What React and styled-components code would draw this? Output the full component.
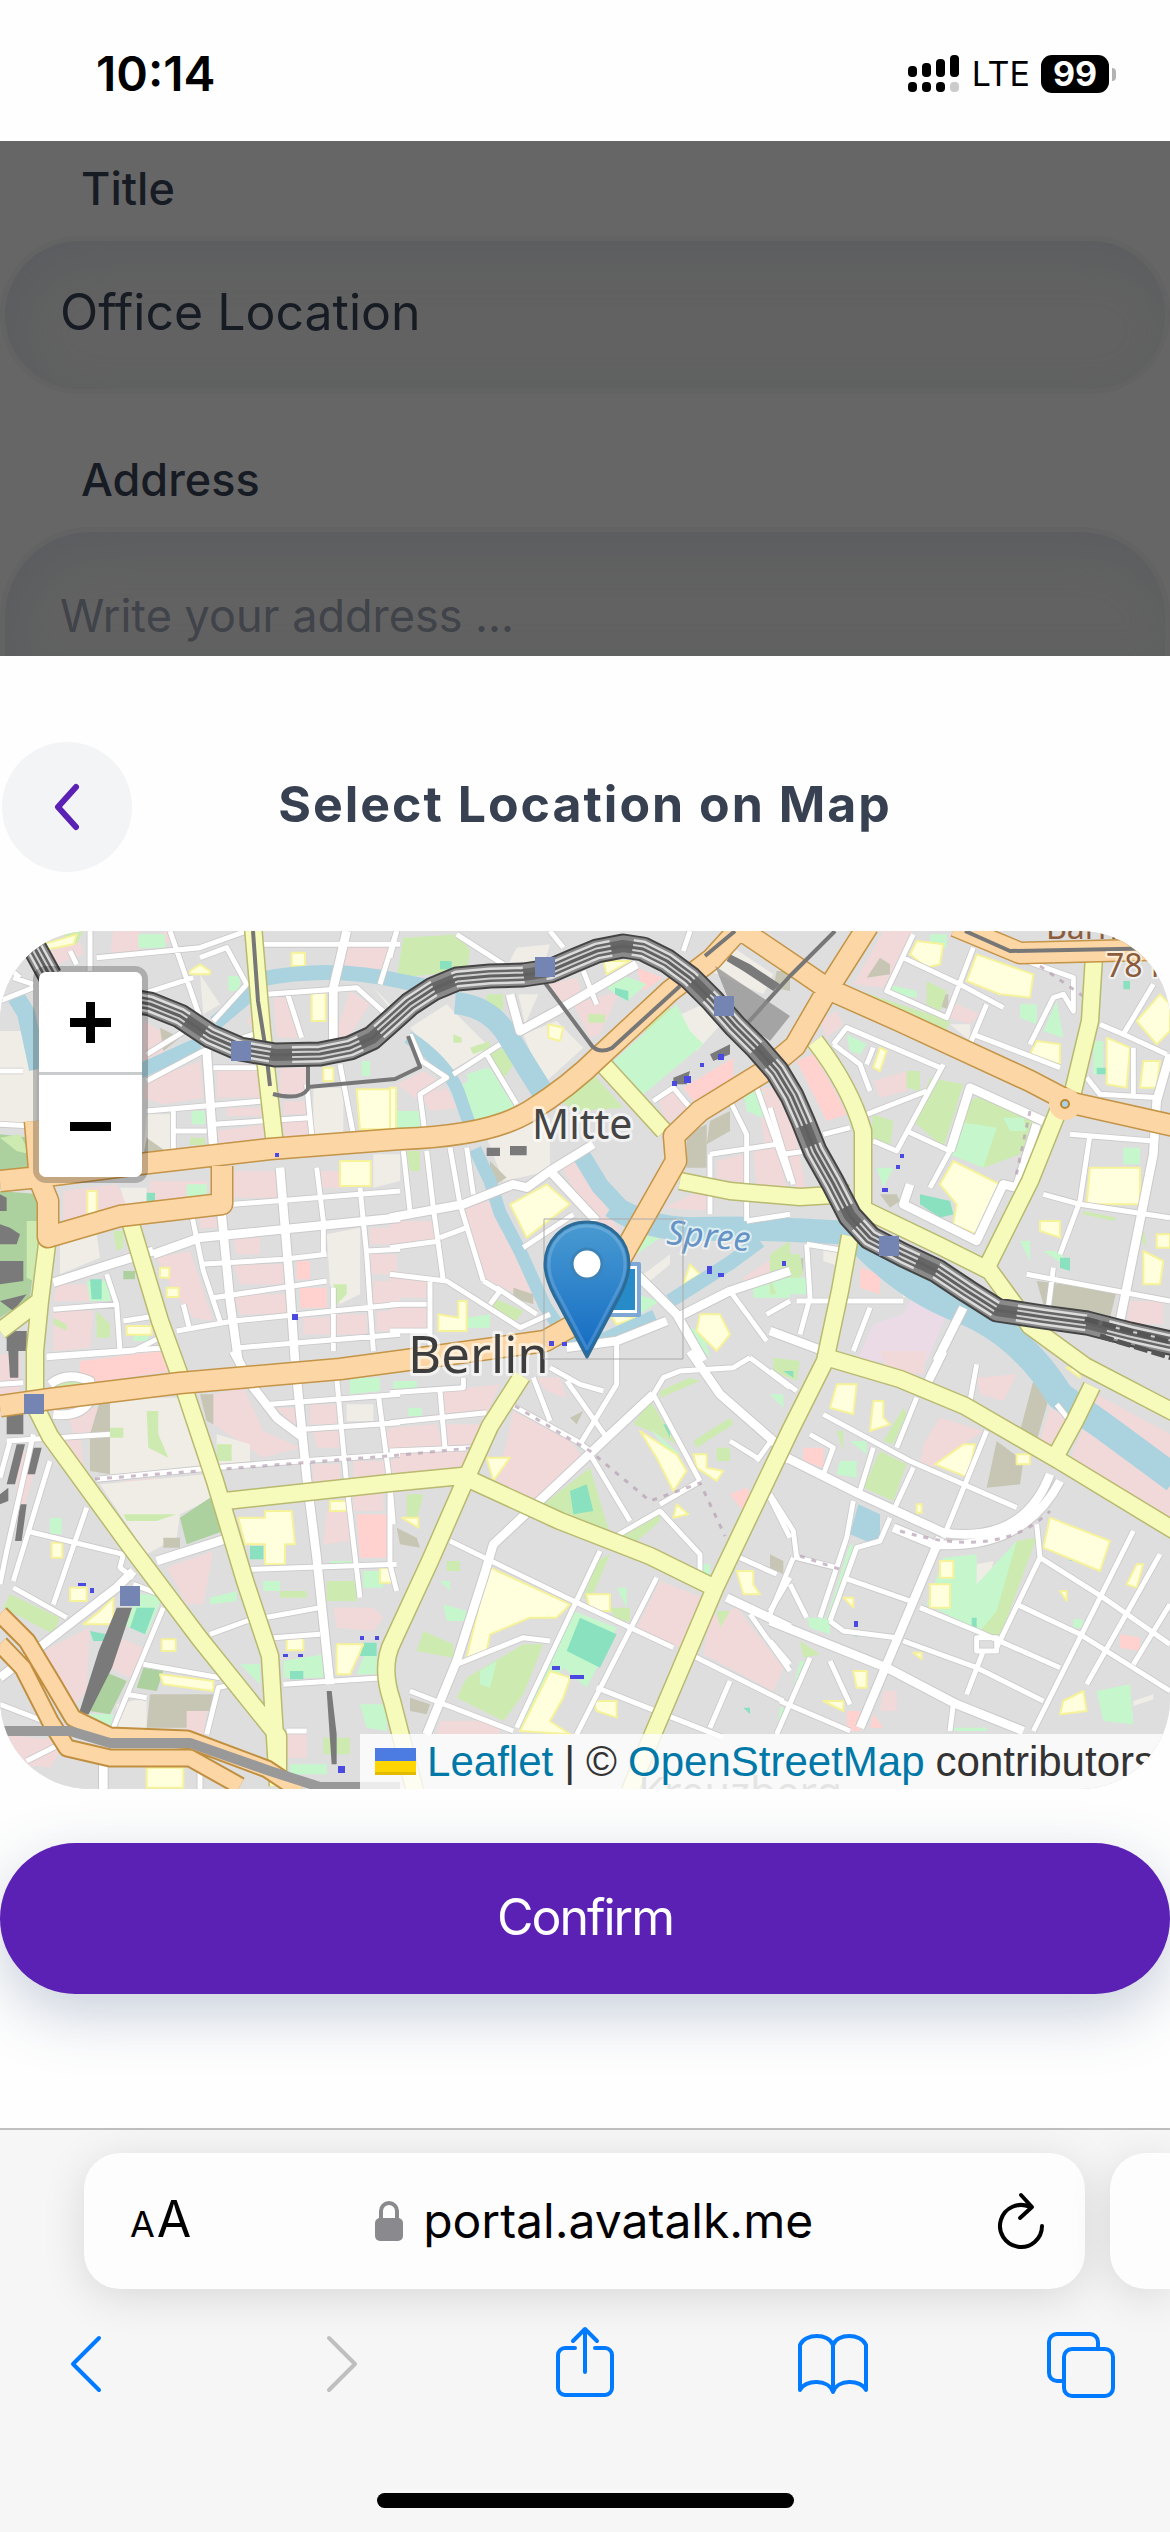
import React from "react";
import styled, { createGlobalStyle } from "styled-components";

const GlobalStyle = createGlobalStyle`
  *, *::before, *::after { box-sizing: border-box; }
  body {
    margin: 0;
    background: #fefefe;
    font-family: Inter, "Liberation Sans", sans-serif;
    color: #000;
  }
  button, input, textarea { font-family: inherit; }
  button { border: 0; padding: 0; margin: 0; background: none; cursor: pointer; color: inherit; }
  svg { display: block; }
`;

const Page = styled.div`
  min-height: 100vh;
  display: flex;
  flex-direction: column;
  overflow: hidden;
`;

/* ---------- status bar ---------- */
const StatusBar = styled.header`
  display: flex;
  justify-content: space-between;
  align-items: center;
  padding: 42px 54px 35px 96px;
`;
const Clock = styled.time`
  font-size: 48px;
  line-height: 64px;
  font-weight: 600;
`;
const StatusIcons = styled.div`
  display: flex;
  align-items: center;
`;
const Network = styled.span`
  margin: 0 11px 0 12px;
  font-size: 34px;
  line-height: 38px;
`;
const Battery = styled.span`
  width: 68px;
  border-radius: 11px;
  background: #000;
  color: #fff;
  font-size: 34px;
  line-height: 38px;
  font-weight: 700;
  text-align: center;
`;
const BatteryTip = styled.span`
  width: 4px;
  height: 13px;
  margin-left: 3px;
  border-radius: 0 4px 4px 0;
  background: #b3b3b3;
`;

/* ---------- dimmed form ---------- */
const Form = styled.form`
  display: flex;
  flex-direction: column;
  gap: 56px;
  padding-top: 18px;
  background: #666;
`;
const Field = styled.div`
  display: flex;
  flex-direction: column;
  gap: 17px;
`;
const Label = styled.label`
  padding-left: 81px;
  font-size: 45px;
  line-height: 60px;
  font-weight: 500;
  color: #171b24;
`;
const fieldLook = `
  width: 100%;
  border: 5px solid #636363;
  background: #616261;
  box-shadow: inset 12px 16px 40px #5c5d61;
  line-height: 60px;
  color: #171b24;
  outline: none;
  &::placeholder { color: #404349; opacity: 1; }
`;
const TextInput = styled.input`
  ${fieldLook}
  height: 158px;
  padding: 0 55px 6px;
  border-radius: 79px;
  font-size: 50px;
`;
const TextArea = styled.textarea`
  ${fieldLook}
  display: block;
  height: 129px;
  padding: 54px 55px 0;
  border-bottom: 0;
  border-radius: 90px 90px 0 0;
  font-size: 45px;
  resize: none;
  overflow: hidden;
`;

/* ---------- sheet ---------- */
const Sheet = styled.main`
  flex: 1;
  padding: 86px 0 134px;
  background: #fefefe;
`;
const SheetHeader = styled.div`
  display: grid;
  grid-template-columns: 132px 1fr 132px;
  align-items: center;
  margin-bottom: 59px;
`;
const BackButton = styled.button`
  width: 130px;
  height: 130px;
  margin-left: 2px;
  display: grid;
  place-items: center;
  border-radius: 50%;
  background: #f2f4f6;
`;
const SheetTitle = styled.h1`
  margin: 0;
  padding-bottom: 6px;
  text-align: center;
  font-size: 50px;
  line-height: 64px;
  font-weight: 700;
  letter-spacing: 2px;
  color: #374151;
`;
const ConfirmButton = styled.button`
  display: block;
  width: 100%;
  height: 151px;
  margin-top: 54px;
  padding-bottom: 4px;
  border-radius: 76px;
  background: #5b20b4;
  box-shadow: 0 20px 60px rgba(60, 85, 130, 0.28);
  color: #fff;
  font-size: 50px;
  letter-spacing: -2px;
`;

/* ---------- map ---------- */
const MapFrame = styled.section`
  position: relative;
  aspect-ratio: 1170 / 858;
  overflow: hidden;
  border-radius: 90px;
  background: #dedede;
`;
const ZoomControl = styled.div`
  position: absolute;
  top: 35px;
  left: 33px;
  border: 6px solid rgba(0, 0, 0, 0.22);
  border-radius: 13px;
  background-clip: padding-box;
  overflow: hidden;
`;
const ZoomButton = styled.button`
  display: grid;
  place-items: center;
  width: 103px;
  height: ${(p) => (p.$first ? 103 : 102)}px;
  background: #fff;
  border-bottom: ${(p) => (p.$first ? "3px solid #c9cccd" : "0")};
`;
const Attribution = styled.div`
  position: absolute;
  right: 0;
  bottom: 0;
  display: flex;
  align-items: center;
  gap: 11px;
  padding: 0 15px;
  background: rgba(255, 255, 255, 0.8);
  font-family: "Liberation Sans", Arial, sans-serif;
  font-size: 42px;
  line-height: 55px;
  color: #333;
  white-space: nowrap;
`;
const MapLink = styled.a`
  display: inline-flex;
  align-items: center;
  gap: 11px;
  color: #0078a8;
  text-decoration: none;
`;
const Flag = styled.span`
  width: 41px;
  height: 27px;
  background: linear-gradient(#4c7be1 50%, #ffd500 50% 90%, #e0bb00 90%);
`;

/* ---------- browser chrome ---------- */
const Browser = styled.footer`
  border-top: 2px solid #bfbfbf;
  padding: 23px 0 24px;
  background: #f6f6f6;
`;
const TabStrip = styled.div`
  display: flex;
  gap: 25px;
  padding-left: 84px;
`;
const AddressBar = styled.div`
  flex: 1;
  display: flex;
  justify-content: space-between;
  align-items: center;
  height: 136px;
  padding: 0 40px 0 46px;
  border-radius: 36px;
  background: #fdfdfd;
  box-shadow: 0 8px 44px rgba(0, 0, 0, 0.12);
`;
const NextTab = styled.div`
  width: 60px;
  border-radius: 36px 0 0 36px;
  background: #fdfdfd;
  box-shadow: 0 8px 44px rgba(0, 0, 0, 0.12);
`;
const TextSizeButton = styled.button`
  font-size: 50px;
  line-height: 60px;
`;
const SmallA = styled.span`
  margin-right: 2px;
  font-size: 36px;
`;
const UrlButton = styled.button`
  display: flex;
  align-items: center;
  gap: 20px;
  font-size: 48px;
  line-height: 60px;
`;
const Toolbar = styled.nav`
  display: flex;
  justify-content: space-between;
  margin: 37px 54px 95px;
`;
const ToolButton = styled.button`
  color: ${(p) => (p.disabled ? "#bfbfbf" : "#007aff")};
`;
const HomeIndicator = styled.div`
  width: 417px;
  height: 15px;
  margin: 0 auto;
  border-radius: 8px;
  background: #000;
`;

/* ---------- map data ---------- */
const INK = {
  pink: "#f1d9d9",
  beige: "#f0ede6",
  khaki: "#c7c6b4",
  salmon: "#ffd2cf",
  lilac: "#ebdbe7",
  green: "#cdebb0",
  mint: "#c6f7cc",
  forest: "#acd19e",
  teal: "#89e1c0",
  yellow: "#ffffdd",
  water: "#aad3df",
  dark: "#7a7a7a",
};

const TILES = [
  {
    at: [0, 920],
    land: {
      pink: "M150 90L240 60 250 100 170 130ZM340 30h80v60l-90 20zM490 30h30v30l-40 10zM1040 70l130 10-30 90-110-10zM430 300l70 40-10 60-60 20zM650 440h140l-10 90H650zM440 480l160-60 10 110-120 20-60-20zM840 440h80v80h-80zM1050 210l60 40-60 90-50 20zM740 300l40-50v100zM820 230h40l50 120h-80zM650 630l140-20v40l-130 20zM680 560h110v25H680zM850 540h80v40h-80zM850 600h80v40l-80 10zM190 810l160-20 30 60-190 50zM450 780h170v50l-180 20zM690 750h140v80H690zM960 750h70v50h-70zM600 890h50v30h-50zM700 950h80v50h-70zM700 1030h150v60H720zM700 1120h160v60H720zM1110 920h90v50h-90zM1110 1000h80v60h-80zM1120 1080h80v70h-80zM170 1090h90l10 50h-110zM160 1170h120l-10 110-110 10zM470 1010l100-20 70 210-60-10-60-80zM910 1190h80v50h-80zM1010 1180h90v60h-90zM1130 1170h70v60h-70zM400 1290l70-20 20 60H300z",
      beige: "M0 330h110v280H0zM440 580h80v120h-90zM940 500h90v140h-90zM1120 200l80 80v20zM180 960l110-20 10 70-120 50zM980 940l100-20v200l-60 30-30-60zM1120 700h80v80l-80 20zM360 800h80v60h-60zM600 160l60 90-50 30z",
      khaki: "M480 320l60 30-50 40zM440 650l70 50h-80z",
      salmon: "M900 1100h80v60h-80zM890 1020h40v55h-40z",
      forest: "M0 640l90 10 20 90-110 20zM0 810l120 10v60l-30 250-90 60zM370 1050h35v25h-35z",
      dark: "M0 910l30 10 30 20-10 30H0zM0 1020h70v60l-70 10zM0 1140l80-20-40 50zM20 1230h60v60H20zM0 820l20 10v40H0z",
      green: "M0 650l60-10 30 60-40-10zM80 900h40l-20 180-20-10zM570 650h45v22h-45zM340 930h30v50l-20 10zM160 1190l40 20v20l-40-20zM290 1170l40 40v40h-40zM1000 1090h40v30l-30 30zM170 30l80 0-20 40z",
      mint: "M415 40h80v40h-80zM685 165h35v45h-35zM575 570h40v40h-40zM560 790h60v35h-60zM1085 420h25v45h-25zM260 1080h70v60h-60zM400 1240h45v20h-45z",
      teal: "M270 1075h35v60h-30zM440 815h25v30h-25z",
      yellow: "M875 95h40v40h-40zM570 150l30-20 30 20v10h-60zM935 215h42v85h-42zM1070 505h115v120H1080zM1020 720h92v75h-92zM262 810h28v75h-28zM130 70l100-30-10 30-100 20zM970 440h30v40h-30zM480 1040h28v30h-28zM500 1100h36v28h-36zM380 1215h75v26h-75z",
    },
    minor: "M270 30V150M40 170L100 190M0 240L100 200M210 90l20 40M290 110L600 80 740 30M510 30L600 290M440 215L580 170M600 110l80-30 60 110-100 110M440 400L570 320M440 480L610 390 790 330M780 70H1200M1190 30l-50 160M800 220L1070 200 1170 290M860 210L905 350M640 440H790M440 570L790 540M520 570V700M520 630H620M1020 430L1060 640M920 490L935 640M640 610L930 590M0 610L100 615M0 450h70M950 740L970 900V1000M575 880L610 1050 660 1200M1080 800L1100 1000 1120 1290M700 850L1200 810M600 1030L850 1015 980 1000M640 1130L980 1080M160 1165L350 1150M530 1230L700 1200 1200 1150M320 1060L350 1150 360 1290M370 1200L500 1180M140 1310L400 1290 500 1240M720 1280L1200 1240M1000 1100V1290M550 1150L570 1230M1100 990L1200 985M0 120l60 50",
    wide: "M620 390L640 680M1040 30L1000 200V380M840 740L870 1100 885 1320M665 880L690 1140 715 1320M460 1000L600 950 1200 890M160 1085L330 1030 460 990",
  },
  {
    at: [390, 920],
    land: {
      pink: "M470 190l90-20 20 50-60 30zM550 250l140-40-60 130-30 10zM20 490l80-40 60 40-60 60zM100 530l70-30 30 60-80 10zM800 520l60-20 30 60-60 50zM510 730l50-20 130 220-30 60zM220 850L310 840 400 1040 460 1100 440 1150 280 1070zM0 900h140v70H0zM0 1070h110v60H0zM0 1150h110v80H0zM980 720l80-20 10 90-90-20zM1090 680h70l30 120h-90zM820 860l130-60v70zM1100 500h60l40 100v100h-70zM1060 1070l90-60v50l-80 40z",
      beige: "M60 320L170 250 300 380 180 450zM400 340L500 300 580 380 460 490zM380 80l100-10-20 70h-110zM830 300l130-60 60 40-100 110zM290 650L480 590V750L340 780zM1000 60l150 100-30 60-160-70zM385 220h60l-40 90zM760 1060l80-60v30l-60 50z",
      khaki: "M890 640l60-30v130h-60zM960 600l60-30v60l-70 40zM300 720l50 50-50 30zM1160 150h40v60l-50-10zM370 1100l60 20v30l-60-20z",
      salmon: "M740 140l80 30-60 40zM880 500l150-90v60l-120 70z",
      green: "M40 50L210 40 240 90 230 150 20 170zM510 540L610 460 700 560 560 570zM300 400l60-30 10 60-40 60zM240 380l60-20v20l-50 20zM190 340l25 10v15h-25zM310 1130l90 40-30 40-60-50zM760 300l80-40 20 50-90 50zM430 860l50 0-70 50zM595 280h50v25h-50zM290 220h50v50l-50-30zM1140 1000l60-40v70zM50 690h40v60h-30z",
      mint: "M670 420L860 250 900 330 940 370 760 520zM200 500L300 440 380 570 250 600zM230 460l60-20 0 40-50 20zM20 570h70v55H20zM650 200l40-40 80 30-60 50zM730 940l80 10-70 50zM740 1120l70 20-60 40zM900 1220l40 10 20 80-50-50zM1060 510h60v80l-50-20zM230 1190l70-10v40h-70zM1090 1090h110v40h-110z",
      teal: "M675 200l40 10v30l-40-20zM150 120h35v25h-35zM965 1245h35v25h-35z",
      yellow: "M360 850L470 790 540 850 410 950zM640 120h80l-70 40zM475 310l45 10-10 40-35-10zM900 1030l30 30-50 30zM145 1180l60 10 0-50h25v90h-85zM930 1180l60 0 30 60-40 50-60-60zM0 500h18v130H0zM660 1180l80 10-60 20zM360 1240h60v60h-60z",
      dark: "M1020 100l60 30 90 60-20 20-90-60-50-30zM850 470l50-20-10 40h-40zM960 400l60-30v30l-50 20zM290 680h40v25h-40zM360 675h50v28h-50z",
    },
    minor: "M580 150L620 250M190 460L330 370M290 400L380 550M20 30L0 110M200 40L340 130M480 30l40 50M880 90L900 30M60 340L95 420 170 470 90 520 105 640M40 690L60 870M110 690L130 860 160 1080M180 680L210 850 280 1080M230 680L250 820M150 950L230 920M0 980L150 960M400 980L550 880M0 1060L170 1080 390 1220 480 1180M280 1080L330 1110 300 1150M320 1100L440 1180M120 1080V1320M0 1150H110M0 1230H120M790 540L850 500 900 560M1020 540L1070 640V900M1100 500L1200 780M960 700L1160 670M960 700V880M1020 1110L1130 1260M680 1260V1320M1070 900L1200 880M1130 1180L1200 1140",
    wide: "M360 220L390 330 500 270 740 130M0 890L220 850 370 790 410 800 480 750 610 670M480 750L620 900M740 1060L860 1180 940 1320M860 1190L1020 1110 1200 1050M530 1280L680 1260 830 1200",
  },
  {
    at: [770, 920],
    land: {
      pink: "M340 30h90l-90 170-90-10zM540 240l90 40-30 30-60-20zM310 480l100-30v60l-80 20zM150 300l50-30 20 40-50 40zM20 560h40l50 250H80zM1080 1140h100v70h-110z",
      beige: "M540 310h60v50zM160 980l60 20v40l-60-20zM370 1060l80 40-50 30z",
      khaki: "M330 110l30 20 0 30-70 10zM800 1080L1040 1110 1020 1190 880 1160 820 1150zM330 820l50 0 10 20-30 20zM500 220h35v45l-30-10zM40 1020l60-10v40l-60 20z",
      salmon: "M80 420l50-20 60 100 40 80-60 20zM270 1040l60 20v60l-60-20z",
      lilac: "M430 1120L540 1160 470 1320H260L310 1210 400 1180z",
      green: "M480 470L580 490 520 680 430 600zM560 560L640 520 800 600 750 700 640 740 540 700zM240 200L540 300 530 330 240 230zM310 580l60 20-10 80-60-30zM940 870l100 20-10 10-90-20zM1110 860l20 120-20-30zM0 1000l90 0 10 60-80 60H0zM410 450h40v60l-40-10zM470 180l60 30-20 60-40-20z",
      mint: "M860 240l20 110-60-20zM550 600l130 20-40 120-100-40zM700 590l60 0 10 40-50 0zM350 190l90 20v20l-80-10zM750 250l50 0 0 60-50-20zM320 740h50l-30 60zM750 960h30v60zM820 990h60v40zM1060 680h50v50h-50zM970 360h30v100h-30zM230 340l60 30-20 30-30-10zM480 40h50v40h-50zM0 1070h110v50H20z",
      teal: "M450 820l90 20 10 40-40 10-60-40zM590 790l60 10-10 15-50-10zM870 1010l30 0v40l-30-10zM980 440h30v20h-30zM1060 180h20v25h-20z",
      yellow: "M440 60l80 10-10 60-40 10-50-40zM620 100l170 60-10 70-90-10-100-40zM800 360l70 10v60l-90-30zM1100 300l70-80 30 30v80l-40 40zM1010 350l70 30-10 120-60-10zM1120 420h50l-10 80h-50zM960 740h150v110h-160zM1120 990l60 30-10 70h-50zM550 720L690 790 620 940 550 910 560 850 510 790zM810 900h60v50l-60-20zM310 440l20-60 20 10-20 60zM1160 940h40v40h-40z",
    },
    minor: "M430 40L350 210 530 290 610 80M400 110L570 190 700 260M650 250L600 370M610 340L870 440M780 370L850 230 880 220 910 270V170L740 110M190 370L230 320 510 440M190 370L270 430 300 510M310 380L290 430M520 430L380 690 310 660M410 630L540 690 480 800M290 580L470 510M160 640L240 620M0 560L70 790M40 700L110 690M80 1140H400M110 970L230 990M110 970L120 1130 90 1240M300 1160L250 1290M1150 190L1060 340 990 310M1060 340L1190 400M950 470L990 520 1170 530M1090 380V520M900 640L1150 660M960 640L930 840 870 1000M820 820L930 850 1200 890M770 1060L1200 1140M850 1040L830 1200",
    wide: "M540 690L600 500 820 600M800 610L740 800 700 790 620 960 400 850 420 790M1200 400L1160 540 1150 700 1050 1200M580 1160L500 1320M0 1230L160 1290",
  },
  {
    at: [0, 1350],
    land: {
      pink: "M640 130l90-20 60 130 110 50-110 30-150-100zM830 170h60v60zM930 160h80v60h-80zM940 240h90v50h-80zM370 390l100-10v90l-80 10zM500 650L640 600 610 760 560 760zM150 890L270 830 260 1020 200 1090 100 930zM360 860l70 30-40 90-60-30zM980 480l60-40 10 130-80 10zM1000 770h120l30 30-30 40-110-10zM560 1080h60l-10 70h-60zM860 1150h60v70h-60zM0 1150L200 1170 150 1250 60 1240zM150 250h90l10 90-60-20zM940 340h80v50h-80zM1060 330h140v50h-140zM1060 410h90v70h-90zM0 10h60v180H0zM200 170h100v80H220zM1150 240h50v50h-50zM60 300l60 0-60 220-20-20z",
      salmon: "M240 30L500 0 510 60 240 100zM1070 490h90v130h-80z",
      beige: "M330 140L540 140 630 350 330 370zM300 400L620 370 640 440 540 490 530 560 440 610zM650 250l100 30v60l-100 10zM1040 160h80v50h-80zM350 1060l90-20v100h-90z",
      khaki: "M300 150h30v220l-60-10V250zM600 130h40v90l-20-10zM490 560l50 0 0 30h-50zM450 1030h190v50l-80 0v50H440z",
      forest: "M540 500L630 440 670 540 560 580zM310 960l70 30-50 100-60-10zM430 950l60 10-20 60-60-10z",
      green: "M440 180h35l0 70 30 70-60-30zM330 230h40v30h-40zM650 280h45v50h-45zM30 730L180 800 160 850 10 770zM370 490h160l-60 20h-90zM980 690h90v60h-90zM840 720h80v20h-80zM970 1160h80v50h-80zM160 90h90v30h-90z",
      mint: "M1050 80h90v40l-90 10zM420 730h70l-50 120-70-30zM260 1090h80l-10 40zM850 930l120-20v70H850zM1080 1060h80v80l-60-10zM990 630h80v20h-80zM1090 660h60v50h-60zM720 940h60v60zM870 1240h110v30H870zM150 500h35v50h-35zM790 690h50v30h-50zM1130 870v100h-60l20-50zM630 740l80-20v30l-80 10z",
      teal: "M410 770h55l-30 80-45-20zM750 585h40v40h-40zM1090 875h40v40h-50zM270 840l50 10v20h-40zM870 960h40v25h-40z",
      yellow: "M715 500h80v-20h80l10 100h-30v60h-60v-60h-60zM155 575h32v45h-32zM210 710h50v40h-50zM485 865h42v35h-42zM480 970l160 20v30l-150-20zM250 820l50-40 40-40v80zM1010 880h80l-40 90h-40zM860 860h50v38h-50zM990 450h50v30h-50zM440 1250h110v60H440zM1140 650h38v45h-38z",
      dark: "M20 190h50v60H20zM350 770h46l-60 180-70 140h-30l60-190zM980 1020h15l15 130v90h-15zM50 280h25l-30 120H20zM0 430l25-20v40l-25 10zM100 290h25l-20 80H80zM60 460h20l-15 110H45zM25 0h30v80H30z",
    },
    minor: "M20 270L330 250M100 250L20 600 0 700M30 270L0 380M150 330L40 690M80 540L370 610 360 650 400 680M260 470L160 760M40 710L200 800M290 385L640 350 900 330 1200 310M1010 80L1040 400 1080 740M1135 130L1170 400 1180 520M810 160L1200 130M910 235L1200 215M750 655L1190 640M630 850L740 810 960 770M850 1000L1150 980M400 700L480 730M490 770L340 1130M430 940L660 980M700 1000L655 1010 620 1150M380 1030L440 1040M0 100L70 95M140 15L500 -10M600 1200V1320M0 1060L130 1110M80 1230L180 1180M860 1140H920M820 860L960 850",
    wide: "M150 100Q200 60 270 90V150Q240 200 160 190M0 980L130 880 350 710 400 660M470 630L690 560M700 0L760 110 830 200 910 260M890 80L920 380 950 620 990 1000M310 1190V1320",
  },
  {
    at: [390, 1350],
    land: {
      pink: "M160 120L330 100 290 190 160 200zM0 230L140 220 160 290 0 300zM160 220H270L260 280 170 290zM10 310L230 300 220 350 10 370zM370 180L540 270 580 320 440 450 320 400zM440 80h70l20 60-60-20zM810 690L940 740 870 890 740 830zM960 800L1040 770 1180 950 1150 1020 940 910zM150 1110h180v40H140z",
      salmon: "M1020 430l50-20 10 20-20 50z",
      khaki: "M540 200l40-20-20 40zM20 530l60 30 10 30-60-10zM60 1040l60 20-10 30-50-10zM1140 630h35v30h-35z",
      green: "M600 350L660 550 460 460zM780 150L800 180 860 280 780 240 730 220zM810 120L900 80 930 90 810 140zM910 270L1020 200 1030 220 920 290zM690 550l60-30 60-30v20l-80 70zM620 630l40-20-60 140-20-10zM100 840l90 40v40l-110-20zM230 980L400 880H460L400 1030 340 1110 200 1040zM50 430h50l-20 80-30-10zM980 780h40l-30 50zM660 770h60v40h-40zM980 290h40v40h-40zM170 630h40v30h-40z",
      mint: "M550 780L680 830 590 1010 520 950 400 1130 380 1130zM160 760l70 20v30h-60zM680 710h30v60zM780 230l90 80-20 10zM150 690h30v30zM930 640h30v40h-30zM1140 130h40v40zM55 170h40v25h-40zM10 90h70v30H10zM270 960l50-30-20 80-30-10z",
      teal: "M570 800L680 850 630 950 530 900zM540 420L590 400 610 480 550 490zM820 220h20v40zM1060 1070h20v20z",
      yellow: "M300 650L540 760 500 800H420L300 850 290 900 230 920 270 750zM290 320h70l-50 70zM590 730h70v50h-60zM750 240L860 310 890 360 850 420 800 320zM910 310h40v40l50 10-20 30-60-40zM860 460l35 30-45 10zM1040 660h50v40l20 30h-50zM610 1050h70v50l-60-20zM480 960l60 20-20 60-40 70 60 40-150-10zM35 500h50v30z",
    },
    minor: "M0 125L220 110V80M150 120L165 290M0 215L290 185M0 300L250 290M360 160L560 270 600 300M430 80L480 210M480 50L570 100 640 120M530 90L650 260M680 0V100L570 280M600 310L720 510M790 130L820 80 870 60 1030 50 1080 20M790 130L930 390M670 560L810 480 930 610V660M810 460L930 390M180 570L550 750 850 890M630 600L380 1130M800 680L560 1150M200 940L400 860 480 870M60 1020L370 1140M620 1010L1000 1160M900 910L1180 1050M1020 990L960 1130M1080 790L1200 960M1140 440L1200 560M1020 270L1100 320M1150 260L1100 330M1050 620L1160 670M0 640L20 720M0 400V640M1200 680L1140 780M1080 20L1200 110",
    wide: "M900 0L990 130 1150 270 1200 330M1010 740L1200 830M790 130L640 270 310 580 280 680 200 930 110 1150",
  },
  {
    at: [770, 1350],
    land: {
      pink: "M620 80L740 70 700 150 630 130zM510 200L640 240 580 280 490 350 450 340 460 280zM840 170l50 30-30 100-50-30zM910 300L980 130 1200 250V560L960 400 900 350zM340 1020h40v60h-50zM0 900l40 50-30 50H0zM330 0H470L460 70 350 60z",
      salmon: "M100 290h60v60l-60-20zM1050 850l60 10v40l-60-10zM230 1080h40v60h-40zM310 1090l30 40h-40z",
      khaki: "M790 90L840 130 800 270 750 240zM680 270L760 330 750 400 650 410zM0 610l40 20v40L0 650z",
      beige: "M620 640l50-10-20 100h-60zM1090 1050l60-20v15l-60 20z",
      green: "M330 300L410 340 370 450 280 410zM400 170l10 20-40 90-30-10zM740 570L800 560 690 860 630 840zM10 20l80 10-10 60-70-30zM200 240h20v60zM90 870l60 40-50 10z",
      mint: "M520 620L620 610 620 700 740 570 680 780 630 840 470 760 500 680zM980 1020L1080 1000 1090 1120 1000 1110zM210 330h50v50l-60-10zM240 270h50v40zM110 800h70v50l-60-20zM240 580l20 10-80 220-10-10zM90 930h30L60 1050zM30 1070h20l-30 80zM550 1130h100v10H550zM910 805h28v25h-28z",
      teal: "M900 590h40v40h-40zM880 530h20v30zM605 800h15v30h-15zM240 840h20v20zM40 60h30v20z",
      yellow: "M200 100h60l-10 90-70-20zM310 150h30v50l20 20-60 20zM580 280h35l-20 100-100-40zM840 500L1020 570 990 660 820 590zM1100 640h20l-20 70-30-10zM510 630h40v50h-40zM480 700h60v70h-60zM220 740h30v30zM250 960h40v50h-30zM160 1050h60v30zM880 1050L940 1020 950 1080 870 1090zM890 50h40v30zM740 310h40v30h-40zM430 905h25v20zM440 460h15v25h-15zM870 720h20v30z",
      water: "M265 460L330 490V560L300 575 240 550z",
    },
    minor: "M160 190L420 330 740 470M440 140L380 290M650 240L520 560M430 350L370 480M120 250L190 290 160 370M310 290L270 420M0 430L70 540 80 620 200 650M70 620L0 790M60 700L110 800M250 450L230 560 150 800M360 500L330 570 260 590 180 810M220 680L420 750M180 810L220 840 380 860M180 930L240 1060M0 870L60 940M120 920L20 1150M30 1050L240 1140M400 870L620 950 820 1050M450 770L620 840 870 950M640 900L590 1030M800 520L810 620 680 890M810 620L1000 740 1200 880M740 760L930 850 1200 1020M1090 540L990 740 790 1140M1170 610L950 1000M1200 760L1090 940M620 860h60v40h-60zM550 1060L540 1140M620 40L600 150M0 60L80 120M860 160L900 210",
    wide: "M520 0L460 120M50 320L270 430 520 545Q760 580 840 370M370 530L490 580Q760 600 870 390M510 560L270 1130M0 810L350 950 560 1060 760 1140",
  },
];

const RIVERS = [
  ["M16 996L26 1012 38 1068", 18],
  ["M140 1070L200 1043M215 1022L258 986M262 978Q330 964 400 980L440 988", 15],
  ["M455 1002Q490 1005 508 1035T542 1090", 22],
  ["M408 1036Q445 1060 458 1090L470 1125M475 1148L490 1180 500 1212 520 1250 545 1305 565 1335 600 1340 655 1315", 13],
  ["M580 1152L600 1185 628 1215", 18],
  ["M612 1205Q650 1230 700 1228T850 1232", 24],
  ["M670 1300L730 1262 760 1240", 14],
  ["M850 1228Q900 1285 960 1308T1060 1395L1103 1425 1175 1478", 28],
];

const YELLOW_ROADS =
  "M253 925L262 1030 275 1145M0 1330L42 1298M680 1180L730 1190 800 1196 850 1193M600 1060L664 1130M48 1235L40 1300 35 1350V1405L50 1435 130 1545 200 1638 278 1735V1785M130 1220L160 1320 180 1375 215 1480 245 1580 270 1655 278 1785M225 1500L390 1482 462 1475 560 1520 650 1555 715 1587M522 1375L490 1425 465 1480 430 1560 393 1640Q380 1665 392 1700L415 1790M850 1235L840 1290 825 1360 790 1430 715 1587 650 1740 630 1790M822 1355L900 1378 965 1405 1060 1460 1175 1530M1052 1462L1075 1420 1092 1385M815 1040Q850 1085 863 1130V1208L940 1245 990 1270 1030 1325 1085 1365 1175 1412M985 1270L1030 1180 1060 1105M1094 955L1090 1020 1072 1095";

const ORANGE_ROADS =
  "M0 1180L30 1177 140 1163 270 1148 400 1138Q490 1135 530 1110T600 1055L670 990 712 958 742 925M735 925L790 962 828 988 900 1020 1030 1080 1072 1102 1175 1125M868 925L828 988 795 1045 765 1070 700 1110 674 1135 676 1160 655 1197 622 1255 590 1315 545 1340 400 1360 340 1368 180 1382 50 1398 0 1405M955 925L1020 952 1175 948M35 1120L40 1180 48 1200V1236L120 1215 222 1203V1165";
const RING_ROADS =
  "M0 1613L27 1640 53 1683 73 1717 110 1735 187 1738 267 1768 300 1790M0 1643L23 1667 50 1720 67 1747 110 1757 190 1757 240 1785";

const MAIN_RAIL =
  "M28 935L50 975M120 998L150 1003 180 1015 210 1035 240 1048 275 1054 320 1053 350 1047 372 1037 390 1021 410 1003 433 988 457 978 490 975 523 974 550 970 573 960 597 950 623 945 643 948 667 960 690 977 712 999 735 1025 757 1047 777 1070 792 1095 803 1120 815 1150 833 1182 850 1215 870 1237 903 1254 937 1270 967 1290 997 1309 1043 1316 1087 1322 1130 1333 1175 1343";

const STATIONS = [[241, 1050], [545, 966], [724, 1005], [889, 1245], [34, 1403], [130, 1595]];
const STOPS =
  "M718 1053h6v6h-6zM684 1075h7v7h-7zM672 1080h5v5h-5zM700 1062h4v4h-4zM707 1265h5v8h-5zM718 1272h6v4h-6zM78 1582h8v3h-8zM90 1587h4v5h-4zM283 1653h5v3h-5zM298 1653h5v3h-5zM360 1635h4v4h-4zM375 1635h4v4h-4zM552 1665h8v4h-8zM570 1674h14v4h-14zM338 1765h7v7h-7zM292 1313h6v6h-6zM275 1152h4v4h-4zM549 1340h5v5h-5zM562 1341h5v4h-5zM900 1153h4v4h-4zM896 1164h4v4h-4zM882 1187h6v4h-6zM782 1260h4v5h-4zM854 1620h4v6h-4z";

function CityMap() {
  const eachTile = (draw) =>
    TILES.map((tile, i) => (
      <g key={i} transform={`translate(${tile.at[0]} ${tile.at[1]}) scale(0.33333)`}>
        {draw(tile)}
      </g>
    ));
  return (
    <svg
      viewBox="0 930 1170 858"
      width="100%"
      height="100%"
      preserveAspectRatio="xMidYMid slice"
      role="img"
      aria-label="Street map of Berlin Mitte"
      strokeLinejoin="round"
    >
      <defs>
        <linearGradient id="pin" x1="0" y1="0" x2="0" y2="1">
          <stop offset="0" stopColor="#4a9bd2" />
          <stop offset="1" stopColor="#136bc2" />
        </linearGradient>
      </defs>
      <rect x="0" y="930" width="1170" height="858" fill="#dedede" />
      {eachTile((t) =>
        Object.entries(t.land).map(([name, d]) => (
          <path key={name} d={d} fill={INK[name]} stroke={name === "yellow" ? "#f6f29a" : "none"} strokeWidth="6" />
        ))
      )}
      <g fill="none" stroke={INK.water}>
        {RIVERS.map(([d, w]) => <path key={d} d={d} strokeWidth={w} />)}
      </g>
      <g fill="none" stroke="#cbc9c9">
        {eachTile((t) => (<><path d={t.minor} strokeWidth="20" /><path d={t.wide} strokeWidth="32" /></>))}
      </g>
      <g fill="none" stroke="#fff">
        {eachTile((t) => (<><path d={t.minor} strokeWidth="15" /><path d={t.wide} strokeWidth="26" /></>))}
      </g>
      <g fill="none" stroke="#b79fb4" strokeWidth="3" strokeDasharray="5 7" opacity="0.7">
        <path d="M95 1478L300 1462 400 1454 470 1447M515 1405L590 1450 650 1500 700 1482 725 1535M800 1555L845 1570M900 1530Q1000 1560 1050 1510M1040 965L1090 1000 1075 1060M1030 1110L1015 1180" />
      </g>
      <g fill="none">
        <path d={YELLOW_ROADS} stroke="#b9ba70" strokeWidth="19" />
        <path d={YELLOW_ROADS} stroke="#f6fabb" strokeWidth="16" />
        <path d={ORANGE_ROADS} stroke="#c49447" strokeWidth="23" />
        <path d={ORANGE_ROADS} stroke="#fcd6a4" strokeWidth="20" />
        <path d={RING_ROADS} stroke="#c08f40" strokeWidth="19" />
        <path d={RING_ROADS} stroke="#fcd6a4" strokeWidth="15" />
        <path d="M0 1730L70 1730 110 1742 190 1742 270 1770 320 1786H400" stroke="#999" strokeWidth="10" />
        <path d="M253 930L258 1000 266 1050 270 1085M273 1093Q300 1100 308 1088V1065M308 1086L395 1078 420 1066 408 1035M540 975L592 1045Q600 1053 612 1047L680 985M705 955L735 930M745 1025L790 975 835 930M965 930L1010 950 1175 947" stroke="#777" strokeWidth="4" />
        <circle cx="1065" cy="1103" r="16" fill="#fcd6a4" />
        <circle cx="1065" cy="1103" r="4" fill={INK.water} stroke="#bb8735" strokeWidth="2" />
      </g>
      <path d="M715 965L790 1015 770 1040 735 1015z" fill="#8c8c8c" opacity="0.7" />
      <g fill="none">
        <path d={MAIN_RAIL} stroke="#444" strokeWidth="25" />
        <path d={MAIN_RAIL} stroke="#8a8a8a" strokeWidth="21" />
        <path d={MAIN_RAIL} stroke="#dcdcdc" strokeWidth="17" strokeDasharray="70 22" />
        <path d={MAIN_RAIL} stroke="#666" strokeWidth="12" />
        <path d={MAIN_RAIL} stroke="#cfcfcf" strokeWidth="7" strokeDasharray="70 22" />
        <path d={MAIN_RAIL} stroke="#606060" strokeWidth="3" />
        <path d="M1085 1318L1175 1342M1100 1335L1175 1358" stroke="#555" strokeWidth="5" strokeDasharray="14 4" />
      </g>
      <path d={STOPS} fill="#4a4ae0" />
      {STATIONS.map(([x, y]) => (
        <rect key={x} x={x - 10} y={y - 10} width="20" height="20" fill="#7485b4" />
      ))}
      <g fontFamily='"Noto Sans", "Open Sans", sans-serif' paintOrder="stroke" strokeLinejoin="round">
        <text x="532" y="1138" fontSize="41" fill="#444" stroke="rgba(255,255,255,0.6)" strokeWidth="6">Mitte</text>
        <text x="408" y="1372" fontSize="51" fill="#3d3d3d" stroke="rgba(255,255,255,0.6)" strokeWidth="6">Berlin</text>
        <text x="666" y="1243" fontSize="34" fontStyle="italic" fill="#6693c6" stroke="rgba(255,255,255,0.6)" strokeWidth="4" transform="rotate(5 666 1243)">Spree</text>
        <text x="1106" y="976" fontSize="32" fill="#8b5c3c" stroke="rgba(255,255,255,0.6)" strokeWidth="4">78 m</text>
        <text x="1046" y="938" fontSize="32" fill="#8b5c3c">Barn</text>
        <text x="638" y="1806" fontSize="42" fill="#777">Kreuzberg</text>
      </g>
      <rect x="592" y="1263" width="47" height="51" fill="#fff" stroke="#7da8d6" strokeWidth="4" />
      <rect x="598" y="1268" width="37" height="41" fill="#268bc6" />
      <rect x="544" y="1218" width="139" height="140" fill="none" stroke="#aaa" />
      <path
        d="M587 1221C563 1221 545 1240 545 1263C545 1274 549 1284 554 1294L587 1356L620 1294C625 1284 629 1274 629 1263C629 1240 611 1221 587 1221Z"
        fill="url(#pin)"
        stroke="#2e6c97"
        strokeWidth="3"
      />
      <path
        d="M587 1225C565 1225 549 1242 549 1263C549 1273 552 1282 557 1291L587 1348L617 1291C622 1282 625 1273 625 1263C625 1242 609 1225 587 1225Z"
        fill="none"
        stroke="#fff"
        strokeOpacity="0.16"
        strokeWidth="3"
      />
      <circle cx="587" cy="1263" r="15" fill="#fff" stroke="#3b83b9" strokeWidth="3" />
    </svg>
  );
}

/* ---------- icons ---------- */
const SignalIcon = () => (
  <svg width="52" height="38" viewBox="0 0 52 38" aria-hidden="true">
    {[[0, 11], [14, 8], [28, 4], [42, 0]].map(([x, y]) => (
      <g key={x}>
        <rect x={x} y={y} width="9" height={22 - y} rx="4" />
        <rect x={x} y="27" width="9" height="10" rx="4" fill={x === 42 ? "#ccc" : "#000"} />
      </g>
    ))}
  </svg>
);

const ToolIcon = ({ children }) => (
  <svg width="72" height="72" viewBox="0 0 72 72" fill="none" stroke="currentColor" strokeWidth="4" strokeLinecap="round" strokeLinejoin="round" aria-hidden="true">
    {children}
  </svg>
);

export default function App() {
  return (
    <Page>
      <GlobalStyle />
      <StatusBar>
        <Clock>10:14</Clock>
        <StatusIcons>
          <SignalIcon />
          <Network>LTE</Network>
          <Battery>99</Battery>
          <BatteryTip />
        </StatusIcons>
      </StatusBar>

      <Form>
        <Field>
          <Label htmlFor="title">Title</Label>
          <TextInput id="title" type="text" defaultValue="Office Location" />
        </Field>
        <Field>
          <Label htmlFor="address">Address</Label>
          <TextArea id="address" placeholder="Write your address ..." />
        </Field>
      </Form>

      <Sheet>
        <SheetHeader>
          <BackButton type="button" aria-label="Back">
            <svg width="26" height="48" viewBox="0 0 26 48" fill="none" stroke="#5b20b4" strokeWidth="6" strokeLinecap="round" strokeLinejoin="round" aria-hidden="true">
              <path d="M22 4L4 24L22 44" />
            </svg>
          </BackButton>
          <SheetTitle>Select Location on Map</SheetTitle>
        </SheetHeader>

        <MapFrame>
          <CityMap />
          <ZoomControl>
            <ZoomButton type="button" $first aria-label="Zoom in">
              <svg width="41" height="41" viewBox="0 0 41 41" aria-hidden="true"><path d="M16 0h9v16h16v9H25v16h-9V25H0v-9h16z" /></svg>
            </ZoomButton>
            <ZoomButton type="button" aria-label="Zoom out">
              <svg width="41" height="9" viewBox="0 0 41 9" aria-hidden="true"><path d="M0 0h41v9H0z" /></svg>
            </ZoomButton>
          </ZoomControl>
          <Attribution>
            <MapLink href="#leaflet"><Flag />Leaflet</MapLink>
            <span>|</span>
            <span>©</span>
            <MapLink href="#openstreetmap">OpenStreetMap</MapLink>
            <span>contributors</span>
          </Attribution>
        </MapFrame>

        <ConfirmButton type="button">Confirm</ConfirmButton>
      </Sheet>

      <Browser>
        <TabStrip>
          <AddressBar>
            <TextSizeButton type="button" aria-label="Text size">
              <SmallA>A</SmallA>A
            </TextSizeButton>
            <UrlButton type="button">
              <svg width="28" height="40" viewBox="0 0 28 40" aria-hidden="true">
                <path d="M6 18V10a8 8 0 0 1 16 0v8" fill="none" stroke="#8a8a8e" strokeWidth="4" />
                <rect x="0" y="17" width="28" height="23" rx="5" fill="#8a8a8e" />
              </svg>
              portal.avatalk.me
            </UrlButton>
            <button type="button" aria-label="Reload">
              <svg width="48" height="58" viewBox="0 0 48 58" fill="none" stroke="#000" strokeWidth="4" strokeLinecap="round" strokeLinejoin="round" aria-hidden="true">
                <path d="M45 34A21 21 0 1 1 33 15" />
                <path d="M24 3L35 15L23 26" />
              </svg>
            </button>
          </AddressBar>
          <NextTab />
        </TabStrip>
        <Toolbar aria-label="Browser">
          <ToolButton type="button" aria-label="Previous page">
            <ToolIcon><path d="M45 12L19 38L45 64" /></ToolIcon>
          </ToolButton>
          <ToolButton type="button" disabled aria-label="Next page">
            <ToolIcon><path d="M27 12L53 38L27 64" /></ToolIcon>
          </ToolButton>
          <ToolButton type="button" aria-label="Share">
            <ToolIcon>
              <path d="M26 22H16a7 7 0 0 0-7 7V62a7 7 0 0 0 7 7H56a7 7 0 0 0 7-7V29a7 7 0 0 0-7-7H46" />
              <path d="M36 46V3M24 15L36 3L48 15" />
            </ToolIcon>
          </ToolButton>
          <ToolButton type="button" aria-label="Bookmarks">
            <ToolIcon>
              <path d="M36 19C32 7 8 7 3 19V64C8 53 32 53 36 66C40 53 64 53 69 64V19C64 7 40 7 36 19V66" />
            </ToolIcon>
          </ToolButton>
          <ToolButton type="button" aria-label="Tabs">
            <ToolIcon>
              <rect x="20" y="23" width="49" height="47" rx="8" />
              <path d="M19 55H13a8 8 0 0 1-8-8V16a8 8 0 0 1 8-8H46a8 8 0 0 1 8 8V22" />
            </ToolIcon>
          </ToolButton>
        </Toolbar>
        <HomeIndicator />
      </Browser>
    </Page>
  );
}
